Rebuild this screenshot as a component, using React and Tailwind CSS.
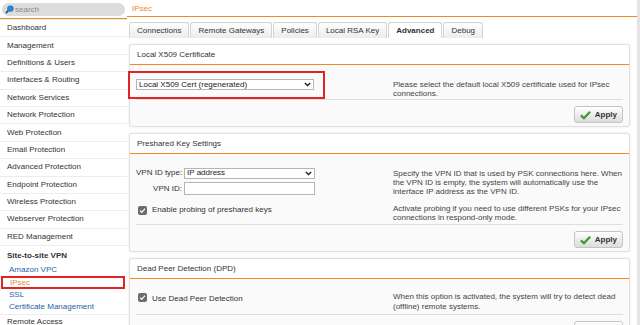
import React from "react";

const navItems = [
  "Dashboard",
  "Management",
  "Definitions & Users",
  "Interfaces & Routing",
  "Network Services",
  "Network Protection",
  "Web Protection",
  "Email Protection",
  "Advanced Protection",
  "Endpoint Protection",
  "Wireless Protection",
  "Webserver Protection",
  "RED Management",
];

const tabs = ["Connections", "Remote Gateways", "Policies", "Local RSA Key", "Advanced", "Debug"];

function Check() {
  return (
    <span className="w-[9px] h-[9px] rounded-[2px] bg-[#6b6b6b] flex items-center justify-center shrink-0">
      <svg width="7" height="7" viewBox="0 0 10 10">
        <path d="M1.5 5.2 L4 7.6 L8.6 2.4" stroke="#fff" strokeWidth="1.8" fill="none" />
      </svg>
    </span>
  );
}

function Caret() {
  return (
    <svg width="7" height="5" viewBox="0 0 10 7" className="shrink-0">
      <path d="M1.2 1.2 L5 5 L8.8 1.2" stroke="#222" strokeWidth="2" fill="none" />
    </svg>
  );
}

function ApplyButton() {
  return (
    <button className="h-[17px] px-[5px] flex items-center gap-[4px] rounded-[3px] border border-[#c4c4c4] bg-gradient-to-b from-[#ffffff] to-[#dcdcdc] text-[8px] font-bold text-[#333]">
      <svg width="11" height="10" viewBox="0 0 12 10">
        <path d="M1 5.4 L4.3 8.6 L11 1.4" stroke="#3c9a2a" strokeWidth="2.4" fill="none" />
      </svg>
      Apply
    </button>
  );
}

function Panel({ title, children }) {
  return (
    <div className="shrink-0 bg-[#fafafa] border border-[#e0e0e0] rounded-[3px] shadow-[0_0_2px_rgba(0,0,0,0.12)]">
      <div className="h-[20px] flex items-center px-[7px] bg-white border-b border-[#f08a24] text-[8px] text-[#333] rounded-t-[3px]">
        {title}
      </div>
      {children}
    </div>
  );
}

export default function App() {
  return (
    <div className="w-[640px] h-[325px] overflow-hidden flex bg-[#ececec] text-[#333]" style={{ fontFamily: "'Liberation Sans', Arial, sans-serif" }}>
      {/* sidebar */}
      <div className="w-[127px] shrink-0 flex flex-col">
        <div className="h-[19px] shrink-0 px-[2px] pt-[3px] bg-white border-b border-[#f08a24]">
          <div className="h-[13px] rounded-full bg-[#dcdcdc] flex items-center pl-[3px] gap-[1px] text-[8px] text-[#8a8a8a]">
            <svg width="9" height="9" viewBox="0 0 10 10">
              <circle cx="6" cy="4" r="3.3" fill="#2f86d6" stroke="#1b5fa0" strokeWidth="0.6" />
              <path d="M3.6 6.3 L1 9" stroke="#1b4f86" strokeWidth="1.8" />
            </svg>
            search
          </div>
        </div>
        <div className="shrink-0 flex flex-col gap-[1px] pt-[1px]">
          {navItems.map((n) => (
            <div key={n} className="h-[16.4px] shrink-0 flex items-center pl-[7px] bg-white text-[8px] text-[#333]">
              {n}
            </div>
          ))}
          <div className="shrink-0 bg-white flex flex-col pl-[7px] pt-[2px] pb-[1px] text-[8px]">
            <div className="h-[16px] flex items-center font-bold text-[#333]">Site-to-site VPN</div>
            <div className="h-[12px] flex items-center pl-[2px] text-[#1f5fa8]">Amazon VPC</div>
            <div className="h-[13px] -ml-[6px] mr-[2px] pl-[7px] flex items-center border-2 border-[#e02424] text-[#f08a24]">IPsec</div>
            <div className="h-[12px] flex items-center pl-[2px] text-[#1f5fa8]">SSL</div>
            <div className="h-[12px] flex items-center pl-[2px] text-[#1f5fa8]">Certificate Management</div>
          </div>
          <div className="h-[14px] shrink-0 flex items-center pl-[7px] bg-white text-[8px] text-[#333]">Remote Access</div>
        </div>
      </div>

      {/* main */}
      <div className="flex-1 bg-white border-r-[3px] border-[#e4e4e4] flex flex-col">
        <div className="h-[17px] shrink-0 flex items-center pl-[5px] pt-[1px] text-[8px] text-[#f08a24] border-b border-[#f08a24]">IPsec</div>
        <div className="flex shrink-0 items-end h-[21px] pl-[2px]">
          {tabs.map((t) => (
            <div
              key={t}
              className={
                t === "Advanced"
                  ? "h-[16px] px-[7px] mr-[1px] flex items-center bg-white border border-b-0 border-[#d4d4d4] rounded-t-[3px] text-[8px] font-bold text-[#333]"
                  : "h-[16px] px-[7px] mr-[1px] flex items-center bg-gradient-to-b from-[#ffffff] to-[#ececec] border border-b-0 border-[#d4d4d4] rounded-t-[3px] text-[8px] text-[#333]"
              }
            >
              {t}
            </div>
          ))}
        </div>

        <div className="flex flex-col gap-[6px] pl-[2px] pr-[7px] pt-[6px]">
          <Panel title="Local X509 Certificate">
            <div className="relative px-[6px]">
              <div className="absolute left-[-2px] top-[6px] w-[197px] h-[28px] border-2 border-[#e02424]" />
              <div className="flex pt-[14px] h-[35px] border-b border-[#dedede]">
                <div className="w-[257px] shrink-0">
                  <div className="w-[178px] h-[11px] border border-[#b5b5b5] bg-white flex items-center justify-between px-[2px] text-[8px] text-[#222]">
                    Local X509 Cert (regenerated)
                    <Caret />
                  </div>
                </div>
                <div className="text-[8px] leading-[9px] text-[#444] pt-[1px]">
                  Please select the default local X509 certificate used for IPsec connections.
                </div>
              </div>
              <div className="flex justify-end pt-[6px] pb-[3px]">
                <ApplyButton />
              </div>
            </div>
          </Panel>

          <Panel title="Preshared Key Settings">
            <div className="px-[6px]">
              <div className="flex pt-[13px] h-[71px] border-b border-[#dedede]">
                <div className="w-[257px] shrink-0 flex flex-col text-[8px]">
                  <div className="flex items-center gap-[2px]">
                    <span className="w-[46px] text-right whitespace-nowrap">VPN ID type:</span>
                    <div className="w-[131px] h-[11px] border border-[#b5b5b5] bg-white flex items-center justify-between px-[2px] text-[#222]">
                      IP address
                      <Caret />
                    </div>
                  </div>
                  <div className="flex items-center gap-[2px] mt-[3px]">
                    <span className="w-[46px] text-right whitespace-nowrap">VPN ID:</span>
                    <div className="w-[131px] h-[13px] border border-[#b5b5b5] bg-white" />
                  </div>
                  <div className="flex items-center gap-[5px] mt-[9px] pl-[2px]">
                    <Check />
                    Enable probing of preshared keys
                  </div>
                </div>
                <div className="text-[8px] leading-[9px] text-[#444] pt-[2px]">
                  <p>Specify the VPN ID that is used by PSK connections here. When the VPN ID is empty, the system will automatically use the interface IP address as the VPN ID.</p>
                  <p className="mt-[8px]">Activate probing if you need to use different PSKs for your IPsec connections in respond-only mode.</p>
                </div>
              </div>
              <div className="flex justify-end pt-[6px] pb-[3px]">
                <ApplyButton />
              </div>
            </div>
          </Panel>

          <Panel title="Dead Peer Detection (DPD)">
            <div className="px-[6px]">
              <div className="flex pt-[13px] h-[36px] border-b border-[#dedede]">
                <div className="w-[257px] shrink-0 flex items-start gap-[5px] pl-[2px] text-[8px] pt-[1px]">
                  <Check />
                  Use Dead Peer Detection
                </div>
                <div className="text-[8px] leading-[10px] text-[#444]">
                  When this option is activated, the system will try to detect dead (offline) remote systems.
                </div>
              </div>
              <div className="flex justify-end pt-[6px] pb-[3px]">
                <ApplyButton />
              </div>
            </div>
          </Panel>
        </div>
      </div>
    </div>
  );
}
